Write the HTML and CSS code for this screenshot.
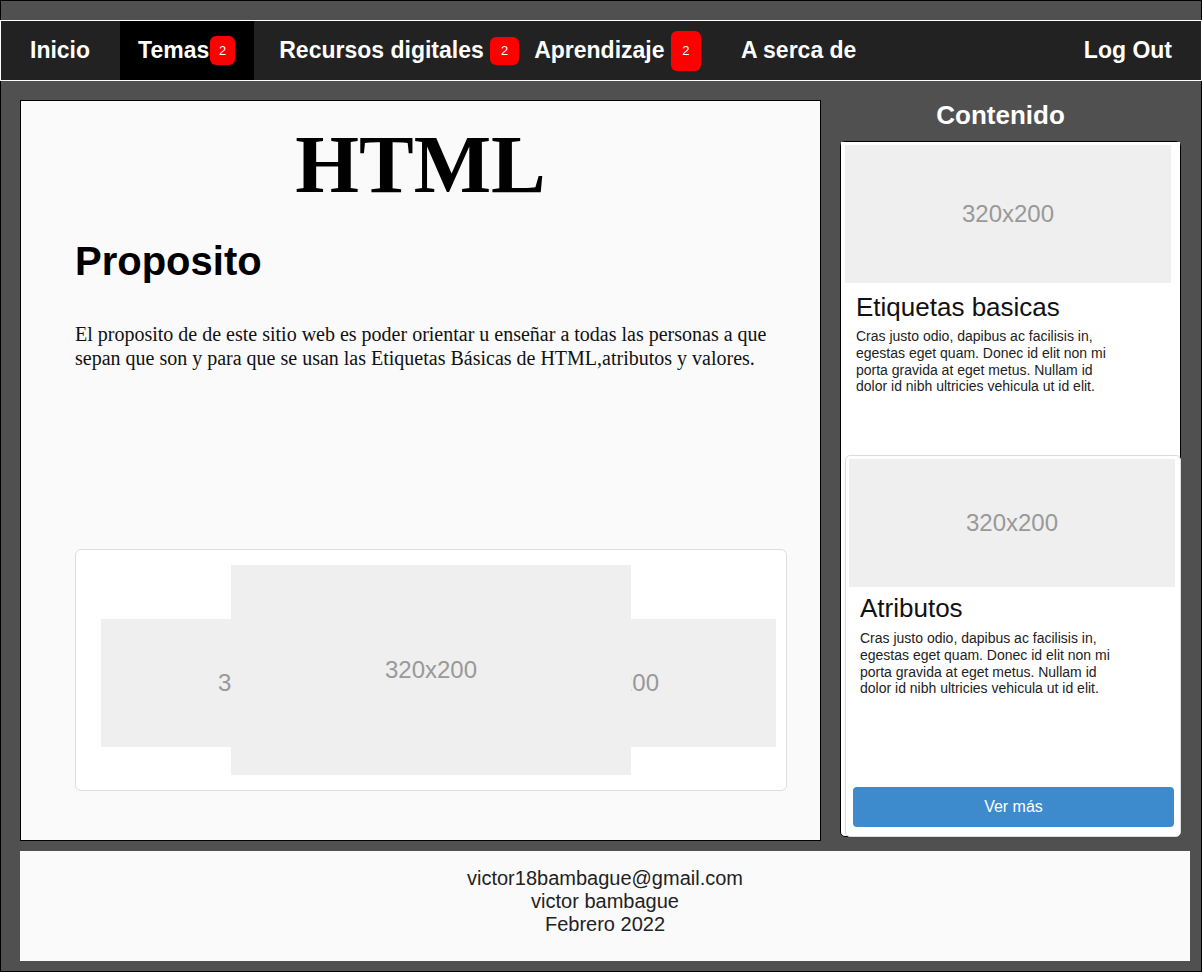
FILE: index.html
```html
<!DOCTYPE html>
<html lang="es">
<head>
<meta charset="utf-8">
<title>HTML</title>
<link rel="stylesheet" href="styles.css">
</head>
<body>
<div class="page">
  <nav class="topnav">
    <a class="nav-link nav-inicio" href="#">Inicio</a>
    <a class="nav-link nav-temas is-active" href="#">Temas<span class="badge badge-sm">2</span></a>
    <a class="nav-link nav-recursos" href="#">Recursos digitales <span class="badge badge-md">2</span></a>
    <a class="nav-link nav-aprendizaje" href="#">Aprendizaje <span class="badge badge-lg">2</span></a>
    <a class="nav-link nav-acerca" href="#">A serca de</a>
    <a class="nav-link nav-logout" href="#">Log Out</a>
  </nav>

  <div class="main">
    <section class="content">
      <h1 class="title">HTML</h1>
      <h2 class="subtitle">Proposito</h2>
      <p class="lead">El proposito de de este sitio web es poder orientar u enseñar a todas las personas a que sepan que son y para que se usan las Etiquetas Básicas de HTML,atributos y valores.</p>
      <div class="carousel">
        <div class="ph ph-side ph-left">320x200</div>
        <div class="ph ph-side ph-right">320x200</div>
        <div class="ph ph-center">320x200</div>
      </div>
    </section>

    <aside class="sidebar">
      <h3 class="sidebar-title">Contenido</h3>
      <div class="sidebar-box">
        <div class="card card-first">
          <div class="ph card-img card-img-first">320x200</div>
          <h4 class="card-title">Etiquetas basicas</h4>
          <p class="card-text">Cras justo odio, dapibus ac facilisis in, egestas eget quam. Donec id elit non mi porta gravida at eget metus. Nullam id dolor id nibh ultricies vehicula ut id elit.</p>
        </div>
        <div class="card card-second">
          <div class="ph card-img card-img-second">320x200</div>
          <h4 class="card-title card-title-second">Atributos</h4>
          <p class="card-text">Cras justo odio, dapibus ac facilisis in, egestas eget quam. Donec id elit non mi porta gravida at eget metus. Nullam id dolor id nibh ultricies vehicula ut id elit.</p>
          <a class="btn" href="#">Ver más</a>
        </div>
      </div>
    </aside>
  </div>

  <footer class="footer">
    <div>victor18bambague@gmail.com</div>
    <div>victor bambague</div>
    <div>Febrero 2022</div>
  </footer>
</div>
</body>
</html>
```

FILE: styles.css
```css
* { box-sizing: border-box; }

html, body {
  margin: 0;
  padding: 0;
}

body {
  font-family: "Liberation Sans", Arial, sans-serif;
  background: #505050;
}

.page {
  height: 972px;
  border: 1px solid #000;
  background: #505050;
}

/* ---------- top navigation ---------- */
.topnav {
  display: flex;
  align-items: stretch;
  height: 61px;
  margin: 19px -1px 0 -1px;
  border: 1px solid #fff;
  background: #222;
}

.nav-link {
  display: flex;
  align-items: center;
  color: #fff;
  font-weight: bold;
  font-size: 23px;
  text-decoration: none;
  white-space: pre;
}

.nav-link.is-active { background: #000; }

.nav-inicio { padding: 0 30px 0 29px; }
.nav-temas { padding: 0 19px 0 18px; }
.nav-recursos { padding: 0 7px 0 25px; }
.nav-aprendizaje { padding: 0 20px 0 8px; }
.nav-acerca { padding: 0 0 0 20px; }
.nav-logout { margin-left: auto; padding: 0 29px 0 18px; }

.badge {
  display: inline-flex;
  align-items: center;
  justify-content: center;
  background: #f00;
  color: #fff;
  font-weight: normal;
  font-size: 13px;
  border-radius: 6px;
}
.badge-sm { width: 25px; height: 29px; margin-left: 1px; }
.badge-md { width: 29px; height: 28px; }
.badge-lg { width: 30px; height: 40px; }

/* ---------- main area ---------- */
.main {
  display: flex;
  align-items: flex-start;
  gap: 19px;
  padding: 19px 0 0 19px;
}

.content {
  width: 801px;
  height: 741px;
  border: 1px solid #000;
  background: #fafafa;
  padding: 0 0 0 54px;
}

.title {
  margin: 17px 0 0 -54px;
  text-align: center;
  font-family: "Liberation Serif", "Times New Roman", serif;
  font-weight: bold;
  font-size: 82px;
  line-height: normal;
  color: #000;
}

.subtitle {
  margin: 26px 0 0 0;
  font-size: 40px;
  font-weight: bold;
  line-height: 46px;
  color: #000;
}

.lead {
  margin: 38px 0 0 0;
  width: 705px;
  font-family: "Liberation Serif", "Times New Roman", serif;
  font-size: 20px;
  line-height: 24px;
  color: #111;
}

.carousel {
  position: relative;
  width: 712px;
  height: 242px;
  margin-top: 179px;
  background: #fff;
  border: 1px solid #ddd;
  border-radius: 6px;
  overflow: hidden;
}

.ph {
  display: flex;
  align-items: center;
  justify-content: center;
  background: #efefef;
  color: #999;
  font-size: 24px;
}

.ph-side {
  position: absolute;
  top: 69px;
  width: 326px;
  height: 128px;
}
.ph-left { left: 25px; }
.ph-right { left: 374px; }

.ph-center {
  position: absolute;
  left: 155px;
  top: 15px;
  width: 400px;
  height: 210px;
}

/* ---------- sidebar ---------- */
.sidebar {
  width: 341px;
}

.sidebar-title {
  margin: 0 0 11px 0;
  padding-right: 20px;
  text-align: center;
  color: #fff;
  font-size: 26px;
  font-weight: bold;
  line-height: 30px;
}

.sidebar-box {
  display: flex;
  flex-direction: column;
  height: 696px;
  border: 1px solid #000;
  border-radius: 5px;
  background: #fff;
}

.card {
  background: #fff;
}

.card-first {
  height: 313px;
  padding: 3px 0 0 4px;
}

.card-second {
  display: flex;
  flex-direction: column;
  flex: 1;
  margin: 0 -1px -1px 4px;
  padding: 3px 3px 9px 3px;
  border: 1px solid #ddd;
  border-radius: 5px;
  box-shadow: 0 1px 2px rgba(0, 0, 0, 0.08);
}

.card-img {
  width: 326px;
  flex: none;
}
.card-img-first { height: 138px; }
.card-img-second { height: 128px; }

.card-title {
  margin: 9px 0 0 11px;
  font-size: 26px;
  font-weight: normal;
  line-height: 30px;
  color: #111;
}
.card-title-second { margin-top: 6px; }

.card-text {
  margin: 6px 0 0 11px;
  width: 262px;
  font-size: 14px;
  line-height: 16.8px;
  color: #222;
}
.card-second .card-text { margin-top: 7px; }

.btn {
  display: flex;
  align-items: center;
  justify-content: center;
  margin: auto 3px 0 4px;
  height: 40px;
  background: #3d8bcd;
  border-radius: 4px;
  color: #fff;
  font-size: 16px;
  text-decoration: none;
}

/* ---------- footer ---------- */
.footer {
  height: 110px;
  margin: 10px 11px 0 19px;
  padding-top: 16px;
  background: #fafafa;
  text-align: center;
  font-size: 20px;
  line-height: 23px;
  color: #222;
}
```
